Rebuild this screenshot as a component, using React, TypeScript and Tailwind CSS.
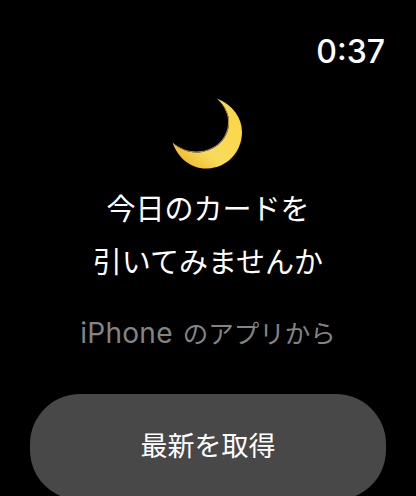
const jp = 'font-["Noto_Sans_CJK_JP","Inter",sans-serif]'

const Moon = () => (
  <svg width="72" height="72" viewBox="0 0 72 72" className="block">
    <defs>
      <linearGradient id="moonFill" x1="0.8" y1="0.3" x2="0.2" y2="1">
        <stop offset="0" stopColor="#fbd84a" />
        <stop offset="0.6" stopColor="#f9db5c" />
        <stop offset="1" stopColor="#eeb92c" />
      </linearGradient>
    </defs>
    <path
      d="M45 0.500 C61 7 70 20 70 34 C70 54 55 70 35 70.500 C19 71 6 60 0.500 44.500 C8 52 19 56 30 54 C47 51 58 38 57 22 C56.500 14 51 6 45 0.500 Z"
      fill="url(#moonFill)"
    />
    <path
      d="M45 0.500 C51 6 56.500 14 57 22 C58 38 47 51 30 54 C19 56 8 52 0.500 44.500 C9 51.500 20 54.800 30 53 C46.500 50.500 56.800 37.500 56 22 C55.500 14 50.500 6 45 0.500 Z"
      fill="#c4921a"
    />
  </svg>
)

export default function App() {
  return (
    <div className="w-[416px] h-[496px] bg-black text-white overflow-hidden flex flex-col">
      <div className="flex justify-end pt-[32px] pr-[31px] h-[98px] shrink-0">
        <span className="font-['Inter',sans-serif] text-[32px] leading-[40px] font-medium">0:37</span>
      </div>
      <div className="flex justify-center shrink-0">
        <div className="ml-[-1px]"><Moon /></div>
      </div>
      <div className={`${jp} mt-[11px] text-center text-[29px] leading-[53px] shrink-0`}>
        <div>今日のカードを</div>
        <div>引いてみませんか</div>
      </div>
      <div className={`${jp} mt-[27px] flex justify-center items-baseline gap-[10px] text-[25.500px] leading-[36px] text-[#848484] shrink-0`}>
        <span className="font-['Inter',sans-serif] text-[28px] tracking-[0.300px]">iPhone</span>
        <span>のアプリから</span>
      </div>
      <div className="mt-[43px] mx-[30px] shrink-0">
        <button className={`${jp} w-[356px] h-[106px] pb-[3px] rounded-[50px] bg-[#484848] text-white text-[27px]`}>
          最新を取得
        </button>
      </div>
    </div>
  )
}
